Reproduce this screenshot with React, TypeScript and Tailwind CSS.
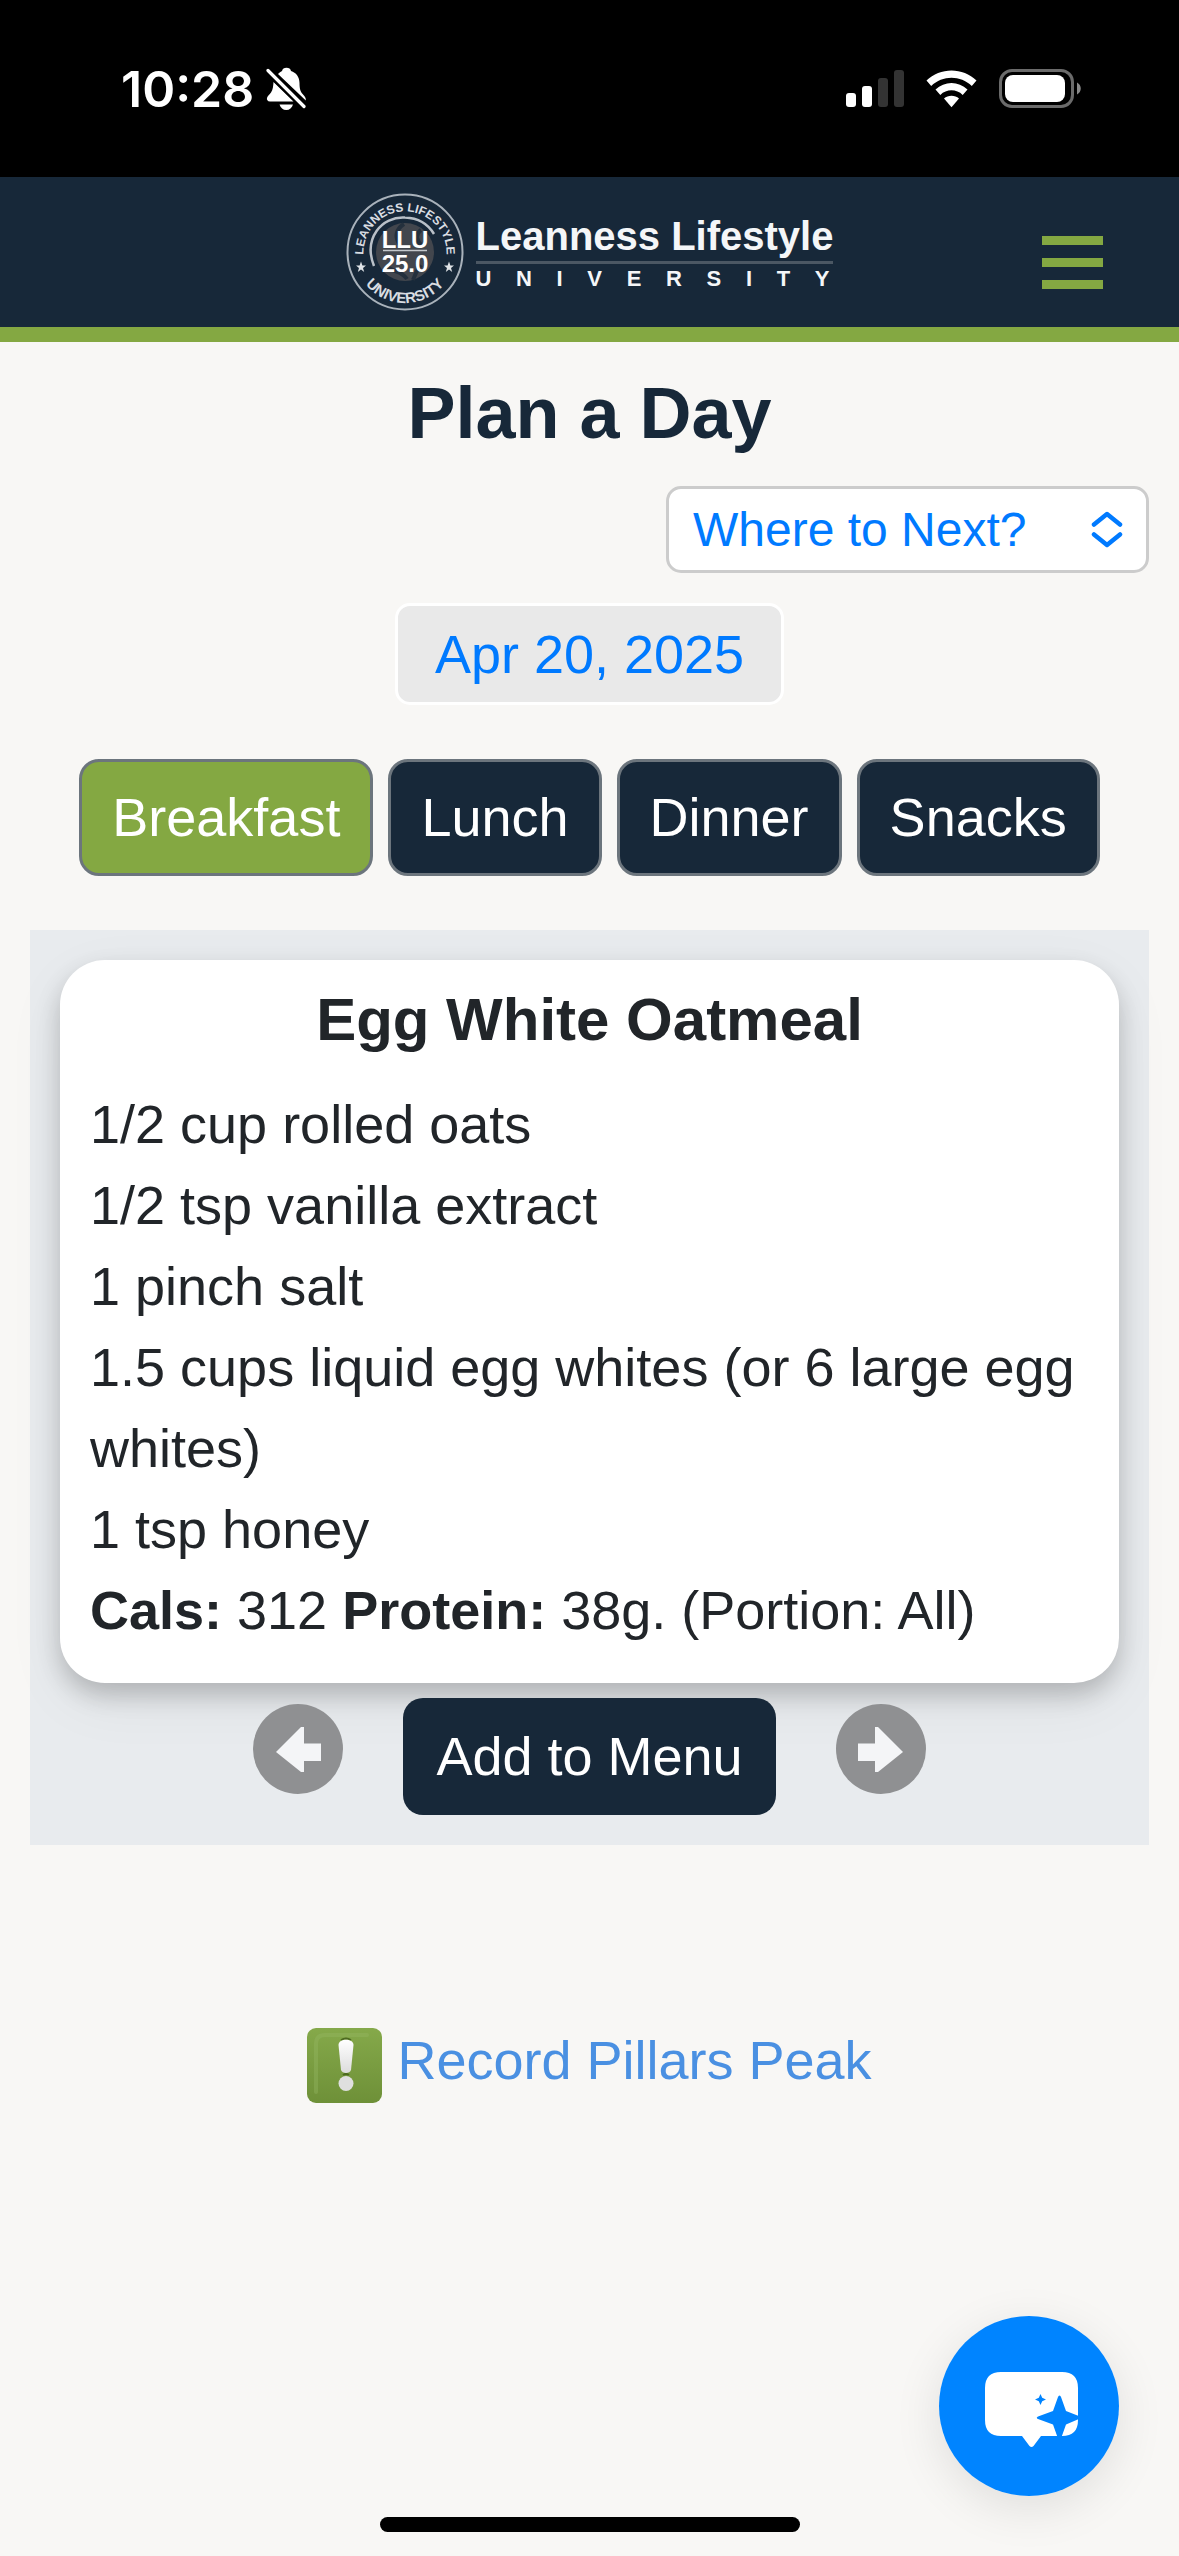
import React, { useState } from 'react';

const meals = ['Breakfast', 'Lunch', 'Dinner', 'Snacks'];

const ingredients = [
  '1/2 cup rolled oats',
  '1/2 tsp vanilla extract',
  '1 pinch salt',
  '1.5 cups liquid egg whites (or 6 large egg whites)',
  '1 tsp honey',
];

function StatusBar() {
  return (
    <div className="flex h-[177px] items-center justify-between bg-black pr-[97px] pl-[121px] text-white">
      <div className="flex items-center gap-3">
        <span className="font-['Inter',sans-serif] text-[50px] leading-[60px] font-semibold">10:28</span>
        {/* Silent mode bell */}
        <svg width="42" height="44" viewBox="0 0 42 44" fill="currentColor" aria-label="Silent mode">
          <path d="M12 7C14 5 15 4.500 16 4C16.500 2 18 .8 20.500 .8C23 .8 24.500 2 25 4C30 5.500 33.500 10 33.500 16C33.500 22 34.500 25 37.500 28C39 29.500 40 31 39.800 33.500Z" />
          <path d="M7.500 15L27.500 34.500H4C1.500 34.500 .5 32.500 1 31C1.500 29 3.500 27.500 5 25.500C7 22.500 7.200 19 7.500 15Z" />
          <path d="M13.500 37.500H27C26 41 23.500 43 20.300 43S14.500 41 13.500 37.500Z" />
          <path d="M2 4L38 39.500" stroke="#000" strokeWidth="7" />
          <path d="M2 3.500L38 39.500" stroke="currentColor" strokeWidth="3.200" strokeLinecap="round" />
        </svg>
      </div>
      <div className="flex items-center gap-[22px]">
        <svg width="58" height="38" viewBox="0 0 58 38" fill="currentColor" aria-label="Signal">
          <rect x="0" y="23" width="10" height="14" rx="3" />
          <rect x="16" y="16" width="10" height="21" rx="3" />
          <rect x="32" y="8" width="10" height="29" rx="3" fill="#333" />
          <rect x="48" y="0" width="10" height="37" rx="3" fill="#333" />
        </svg>
        <svg width="51" height="38" viewBox="0 0 51 38" fill="currentColor" aria-label="Wi-Fi">
          <path d="M.5 10.500C14 -3 37 -3 50.500 10.500L45.800 16C34.500 5 16.500 5 5.200 16Z" />
          <path d="M9.500 19.500C18.500 10.800 32.500 10.800 41.500 19.500L36.700 25C30.500 18.800 20.500 18.800 14.300 25Z" />
          <path d="M18 28.500C22 24.800 29 24.800 33 28.500L25.500 37.300Z" />
        </svg>
        <svg width="83" height="39" viewBox="0 0 83 39" aria-label="Battery">
          <rect x="1.500" y="1.500" width="72" height="36" rx="11.500" fill="none" stroke="#6b6b6b" strokeWidth="3" />
          <rect x="6" y="6" width="60" height="27" rx="8" fill="#fff" />
          <path d="M78 13.500C83 16 83 23 78 25.500Z" fill="#8a8a8a" />
        </svg>
      </div>
    </div>
  );
}

function Logo() {
  return (
    <a href="#" className="flex items-center gap-[12px] text-[#f4f6f8]">
      <svg width="118" height="118" viewBox="0 0 118 118" fontFamily="'Liberation Sans', Arial, sans-serif" fontWeight="700">
        <defs>
          <path id="seal-top" d="M18.500 69A41.500 41.500 0 1 1 99.500 69" />
          <path id="seal-bottom" d="M8 59A51 51 0 0 0 110 59" />
        </defs>
        <circle cx="59" cy="59" r="57.500" fill="none" stroke="#a9b2bb" strokeWidth="2" />
        <circle cx="59" cy="59" r="29" fill="#42464d" />
        <path d="M58 31C50 36 48 44 54 52M75 37C68 42 72 49 76 53M40 73C48 80 55 77 61 86M75 72C69 80 68 84 67 87" fill="none" stroke="#24303d" strokeWidth="4" />
        <path d="M28 73C17 45 36 23 59 24.500C72 25 82 31 88 41" fill="none" stroke="#b9c0c8" strokeWidth="2.500" />
        <text fill="#d9dde2" fontSize="12" textAnchor="middle">
          <textPath href="#seal-top" startOffset="50%">LEANNESS LIFESTYLE</textPath>
        </text>
        <text fill="#d9dde2" fontSize="15" textAnchor="middle">
          <textPath href="#seal-bottom" startOffset="50%">UNIVERSITY</textPath>
        </text>
        <path d="M15 68.500L16.400 72.500H20L17 75L18.200 79L15 76.500L11.800 79L13 75L10 72.500H13.600Z" fill="#dfe3e7" />
        <path d="M103 68.500L104.400 72.500H108L105 75L106.200 79L103 76.500L99.800 79L101 75L98 72.500H101.600Z" fill="#dfe3e7" />
        <text x="59" y="55" fill="#fff" fontSize="24" textAnchor="middle">LLU</text>
        <path d="M37 57.500H81" stroke="#c4c8cc" strokeWidth="1.500" />
        <text x="59" y="79" fill="#fff" fontSize="24" textAnchor="middle">25.0</text>
      </svg>
      <div className="flex flex-col pt-1">
        <span className="text-[40px] leading-[42px] font-bold">Leanness Lifestyle</span>
        <span className="mt-1 border-b-[3px] border-[#4b5763]" />
        <span className="flex justify-between pt-px pr-1 text-[22px] leading-[28px] font-bold" aria-label="University">
          {'UNIVERSITY'.split('').map((letter, i) => (
            <span key={i}>{letter}</span>
          ))}
        </span>
      </div>
    </a>
  );
}

function Header() {
  return (
    <header className="relative flex h-[165px] items-center justify-center border-b-[15px] border-[#84a842] bg-[#172839]">
      <Logo />
      <button aria-label="Menu" className="absolute top-[59px] right-[76px] flex flex-col gap-[13px]">
        <span className="h-[9px] w-[61px] bg-[#84a842]" />
        <span className="h-[9px] w-[61px] bg-[#84a842]" />
        <span className="h-[9px] w-[61px] bg-[#84a842]" />
      </button>
    </header>
  );
}

function ArrowButton({ direction }: { direction: 'left' | 'right' }) {
  return (
    <button aria-label={direction === 'left' ? 'Previous meal' : 'Next meal'} className="mt-[6px]">
      <svg width="90" height="90" viewBox="0 0 90 90">
        <circle cx="45" cy="45" r="45" fill="#8f9092" />
        {direction === 'left' ? (
          <path d="M23 48L48 23H51V39.500H68V57H51V68H48Z" fill="#f4f5f7" />
        ) : (
          <path d="M67 48L42 23H39V39.500H22V57H39V68H42Z" fill="#f4f5f7" />
        )}
      </svg>
    </button>
  );
}

export default function App() {
  const [meal, setMeal] = useState('Breakfast');

  return (
    <div className="min-h-screen bg-[#f8f7f5] font-['Liberation_Sans',Arial,sans-serif] text-[54px] leading-[81px] text-[#212529]">
      <StatusBar />
      <Header />

      <main className="px-[30px] pt-7">
        <h1 className="text-center text-[72px] leading-[86px] font-bold text-[#172839]">Plan a Day</h1>

        <div className="mt-[30px] flex justify-end">
          <div className="relative w-[483px]">
            <select
              aria-label="Where to Next?"
              className="block h-[87px] w-full appearance-none rounded-[15px] border-[3px] border-[#ccc] bg-white px-6 text-[48px] leading-[60px] text-[#007aff]"
            >
              <option>Where to Next?</option>
            </select>
            <svg className="pointer-events-none absolute top-[25px] right-[26px]" width="32" height="37" viewBox="0 0 32 37" fill="none" stroke="#007aff" strokeWidth="4.500" strokeLinecap="round" strokeLinejoin="round">
              <path d="M3 13.500L16 3L29 13.500M3 23.500L16 34L29 23.500" />
            </svg>
          </div>
        </div>

        <div className="mt-[30px] flex justify-center">
          <button className="h-[102px] rounded-[15px] border-[3px] border-white bg-[#e9e9e9] px-[37px] text-[#007aff]">Apr 20, 2025</button>
        </div>

        <div className="mt-[54px] flex justify-center gap-[15px]">
          {meals.map((name) => (
            <button
              key={name}
              onClick={() => setMeal(name)}
              className={`rounded-[20px] border-[3px] border-[#6c757d] px-[30px] py-[15px] text-white ${
                meal === name ? 'bg-[#84a842]' : 'bg-[#172839]'
              }`}
            >
              {name}
            </button>
          ))}
        </div>

        <section className="mt-[54px] bg-[#e8ebee] p-[30px]">
          <div className="rounded-[45px] bg-white px-[30px] pt-6 pb-8 shadow-[0_12px_24px_rgba(0,0,0,0.2),0_18px_60px_rgba(0,0,0,0.06)]">
            <h2 className="mb-7 text-center text-[60px] leading-[72px] font-bold">Egg White Oatmeal</h2>
            {ingredients.map((line) => (
              <p key={line}>{line}</p>
            ))}
            <p>
              <strong>Cals:</strong> 312 <strong>Protein:</strong> 38g. (Portion: All)
            </p>
          </div>
          <div className="relative mt-[15px] flex items-start justify-center gap-[60px]">
            <ArrowButton direction="left" />
            <button className="rounded-[20px] bg-[#172839] px-[33px] py-[18px] text-white">Add to Menu</button>
            <ArrowButton direction="right" />
          </div>
        </section>

        <a href="#" className="mt-[175px] flex items-start justify-center gap-[15px] text-[#4a90e2]">
          <svg className="mt-2" width="75" height="75" viewBox="0 0 75 75">
            <defs>
              <linearGradient id="badge" x1="0" y1="0" x2="0" y2="1">
                <stop offset="0" stopColor="#85a94a" />
                <stop offset="1" stopColor="#6e9038" />
              </linearGradient>
              <linearGradient id="mark" x1="0" y1="0" x2="0" y2="1">
                <stop offset="0" stopColor="#fff" />
                <stop offset="1" stopColor="#dcdcdc" />
              </linearGradient>
            </defs>
            <rect width="75" height="75" rx="9" fill="url(#badge)" />
            <path d="M9 64V16Q9 7 18 7H60" fill="none" stroke="#99b968" strokeWidth="4" strokeLinecap="round" opacity=".35" />
            <path d="M34 12Q39 9 44 12M36 47Q39 45 42 47" fill="none" stroke="#4d6a20" strokeWidth="2" />
            <path d="M31.500 17C31.500 10 46.500 10 46.500 17L44 42C43 46 35 46 34 42Z" fill="url(#mark)" />
            <circle cx="39" cy="55.500" r="7.500" fill="#dfdfdf" />
          </svg>
          Record Pillars Peak
        </a>
      </main>

      {/* Chat launcher */}
      <button aria-label="Open chat" className="fixed right-[60px] bottom-[60px] rounded-full shadow-[0_12px_48px_rgba(0,0,0,0.1)]">
        <svg width="180" height="180" viewBox="0 0 180 180">
          <circle cx="90" cy="90" r="90" fill="#0084ff" />
          <path d="M62 56H123Q139 56 139 72V104Q139 120 123 120H102L94.500 130Q92.500 132 90.500 130L83 120H62Q46 120 46 104V72Q46 56 62 56Z" fill="#fff" />
          <path d="M120.500 79.500Q121.500 79.500 122 81L127 95L141 100.500Q143 101.500 141 102.500L127 108.500L121.500 124H119.500L114 108.500L99 103Q96.500 101.800 99 100.500L114 95L119 81Q119.500 79.500 120.500 79.500Z" fill="#0084ff" />
          <path d="M101.500 78L103.200 81.800L107 83.500L103.200 85.200L101.500 89L99.800 85.200L96 83.500L99.800 81.800Z" fill="#0084ff" />
        </svg>
      </button>

      {/* Home indicator */}
      <div className="fixed inset-x-0 bottom-6 mx-auto h-[15px] w-[420px] rounded-full bg-black" />
    </div>
  );
}
